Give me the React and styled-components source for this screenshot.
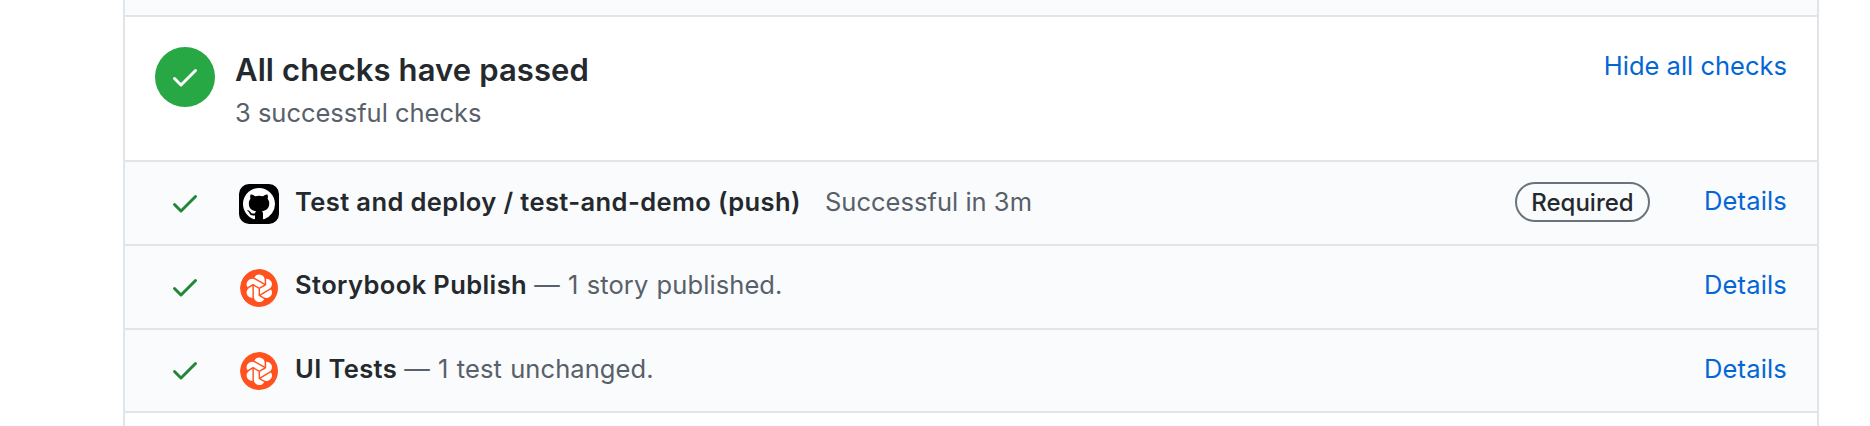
import React from "react";
import styled, { createGlobalStyle } from "styled-components";
import { SiChromatic } from "react-icons/si";

const GlobalStyle = createGlobalStyle`
  * { box-sizing: border-box; }
  body {
    margin: 0;
    background: #fff;
    color: #24292e;
    font-family: Inter, "Liberation Sans", sans-serif;
    font-size: 25.5px;
    font-weight: 400;
    line-height: 40px;
    overflow: hidden;
  }
`;

const Panel = styled.main`
  width: 1696px;
  height: 426px;
  margin-left: 123px;
  border: solid #e1e4e8;
  border-width: 0 2px;
  overflow: hidden;
`;

const PreviousSection = styled.div`
  height: 17px;
  background: #fafbfc;
  border-bottom: 2px solid #e1e4e8;
`;

const Summary = styled.header`
  display: flex;
  align-items: flex-start;
  height: 145px;
  padding: 30px 30px 0;
  border-bottom: 2px solid #e1e4e8;
`;

const StatusBadge = styled.span`
  display: flex;
  align-items: center;
  justify-content: center;
  width: 60px;
  height: 60px;
  border-radius: 50%;
  background: #28a745;
`;

const SummaryText = styled.div`
  flex: 1;
  padding-left: 20px;
`;

const Title = styled.h3`
  margin: 0;
  font-size: 31px;
  font-weight: 600;
  line-height: 46px;
  letter-spacing: 0.1px;
`;

const Subtitle = styled.p`
  margin: 0;
  color: #586069;
  letter-spacing: -0.02px;
`;

const Link = styled.a`
  color: #0366d6;
  text-decoration: none;
`;

const HideLink = styled(Link)`
  margin-top: -1px;
`;

const DetailsLink = styled(Link)`
  margin-bottom: 4px;
  letter-spacing: 0.17px;
`;

const Label = styled.div`
  flex: 1;
  margin-bottom: ${(p) => (p.$required ? "2px" : "4px")};
  white-space: pre;
`;

const CheckRow = styled.div`
  display: flex;
  align-items: center;
  height: 84px;
  padding: 0 30px 0 44px;
  background: #fafbfc;
  border-bottom: 2px solid #e1e4e8;

  &:last-child {
    height: 83px;
    padding-bottom: 1px;
  }

  &:last-child ${Label}, &:last-child ${DetailsLink} {
    margin-bottom: 2px;
  }
`;

const Avatar = styled.span`
  display: flex;
  align-items: center;
  justify-content: center;
  flex: none;
  width: 40px;
  height: 40px;
  margin: 2px 16px 0 38px;
`;

const Name = styled.strong`
  font-weight: 600;
  letter-spacing: 0.4px;
`;

const Description = styled.span`
  margin-left: ${(p) => (p.$required ? "24px" : "7px")};
  color: #586069;
  letter-spacing: ${(p) => (p.$required ? "0.02px" : "0.09px")};
  word-spacing: ${(p) => (p.$required ? "0" : "1px")};
`;

const Required = styled.span`
  width: 135px;
  height: 40px;
  margin: 0 54px 2px 0;
  border: 2px solid #6a737d;
  border-radius: 20px;
  font-size: 24px;
  font-weight: 500;
  line-height: 37px;
  text-align: center;
`;

const ChromaticDisc = styled(SiChromatic)`
  width: 38.6px;
  height: 38.6px;
  border-radius: 50%;
  background: radial-gradient(circle, #fff 17px, transparent 17.5px);
  color: #ff521f;
`;

const Check = ({ color }) => (
  <svg width="32" height="32" viewBox="0 0 16 16" fill={color} aria-hidden="true">
    <path d="M13.78 4.22a.75.75 0 010 1.06l-7.25 7.25a.75.75 0 01-1.06 0L2.22 9.28a.75.75 0 011.06-1.06L6 10.94l6.72-6.72a.75.75 0 011.06 0z" />
  </svg>
);

const GitHubIcon = () => (
  <svg width="40" height="40" viewBox="0 0 40 40" aria-hidden="true">
    <rect width="40" height="40" rx="10" fill="#000" />
    <path
      transform="translate(4 4) scale(2)"
      fill="#fff"
      d="M8 0C3.58 0 0 3.58 0 8c0 3.54 2.29 6.53 5.47 7.59.4.07.55-.17.55-.38 0-.19-.01-.82-.01-1.49-2.01.37-2.53-.49-2.69-.94-.09-.23-.48-.94-.82-1.13-.28-.15-.68-.52-.01-.53.63-.01 1.08.58 1.23.82.72 1.21 1.87.87 2.33.66.07-.52.28-.87.51-1.07-1.78-.2-3.64-.89-3.64-3.95 0-.87.31-1.59.82-2.15-.08-.2-.36-1.02.08-2.12 0 0 .67-.21 2.2.82.64-.18 1.32-.27 2-.27.68 0 1.36.09 2 .27 1.53-1.04 2.2-.82 2.2-.82.44 1.1.16 1.92.08 2.12.51.56.82 1.27.82 2.15 0 3.07-1.87 3.75-3.65 3.95.29.25.54.73.54 1.48 0 1.07-.01 1.93-.01 2.2 0 .21.15.46.55.38A8.013 8.013 0 0016 8c0-4.42-3.58-8-8-8z"
    />
  </svg>
);

const checks = [
  { name: "Test and deploy / test-and-demo (push)", text: "Successful in 3m", icon: GitHubIcon, required: true },
  { name: "Storybook Publish", text: "— 1 story published.", icon: ChromaticDisc, required: false },
  { name: "UI Tests", text: "— 1 test unchanged.", icon: ChromaticDisc, required: false },
];

export default function App() {
  return (
    <>
      <GlobalStyle />
      <Panel>
        <PreviousSection />
        <Summary>
          <StatusBadge><Check color="#fff" /></StatusBadge>
          <SummaryText>
            <Title>All checks have passed</Title>
            <Subtitle>3 successful checks</Subtitle>
          </SummaryText>
          <HideLink>Hide all checks</HideLink>
        </Summary>
        {checks.map(({ name, text, icon: Icon, required }) => (
          <CheckRow key={name}>
            <Check color="#22863a" />
            <Avatar><Icon /></Avatar>
            <Label $required={required}>
              <Name>{name}</Name>
              <Description $required={required}>{text}</Description>
            </Label>
            {required && <Required>Required</Required>}
            <DetailsLink>Details</DetailsLink>
          </CheckRow>
        ))}
      </Panel>
    </>
  );
}
